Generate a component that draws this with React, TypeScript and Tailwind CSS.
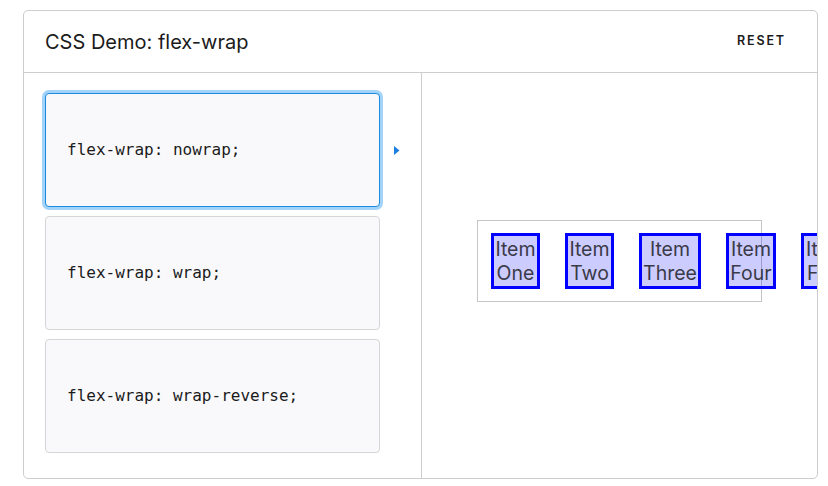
const choices = ["flex-wrap: nowrap;", "flex-wrap: wrap;", "flex-wrap: wrap-reverse;"];

const items = [
  { a: "Item", b: "One", w: "w-[49px]" },
  { a: "Item", b: "Two", w: "w-[49px]" },
  { a: "Item", b: "Three", w: "w-[62px]" },
  { a: "Item", b: "Four", w: "w-[50px]" },
  { a: "Item", b: "Five", w: "w-[50px]" },
];

function App() {
  return (
    <div className="w-[828px] h-[486px] bg-white pt-[10px] pl-[23px] font-['Inter',sans-serif]">
      <div className="w-[795px] h-[469px] border border-[#cdcdcd] rounded-[5px] flex flex-col overflow-hidden">
        <div className="h-[62px] shrink-0 flex items-center justify-between pl-[21px] pr-[31px] border-b border-[#cdcdcd]">
          <h1 className="text-[20px] text-[#1b1b1b] font-normal">CSS Demo: flex-wrap</h1>
          <button className="text-[12.5px] font-semibold tracking-[0.15em] text-[#1b1b1b]">RESET</button>
        </div>
        <div className="flex flex-1 min-h-0">
          <div className="w-[398px] shrink-0 border-r border-[#cdcdcd] pt-[20px] pl-[21px] flex flex-col gap-[9px]">
            {choices.map((c, i) => (
              <div key={c} className="relative w-[335px]">
                <div
                  className={
                    i === 0
                      ? "h-[114px] rounded-[4px] bg-[#f9f9fb] border border-[#1b8be0] ring-[3px] ring-[#a3d3f8] flex items-center pl-[21px]"
                      : "h-[114px] rounded-[4px] bg-[#f9f9fb] border border-[#d5d5d8] flex items-center pl-[21px]"
                  }
                >
                  <span className="font-['DejaVu_Sans_Mono',monospace] text-[16px] text-[#1b1b1b]">{c}</span>
                </div>
                {i === 0 && (
                  <svg className="absolute left-[349px] top-[53px]" width="6" height="9" viewBox="0 0 6 9">
                    <path d="M0 0 L5.5 4.5 L0 9 Z" fill="#1a7fe0" />
                  </svg>
                )}
              </div>
            ))}
          </div>
          <div className="flex-1 overflow-hidden pt-[147px] pl-[55px]">
            <div className="w-[285px] h-[82px] border border-[#c5c5c5] flex items-center pl-[13px] gap-[25px]">
              {items.map((it) => (
                <div
                  key={it.b}
                  className={`${it.w} shrink-0 h-[56px] border-[3px] border-[#0000ff] bg-[rgba(0,0,255,0.2)] flex flex-col items-center justify-center text-[19.5px] leading-[24px] text-[#3a3a48] font-['Inter',sans-serif]`}
                >
                  <span>{it.a}</span>
                  <span>{it.b}</span>
                </div>
              ))}
            </div>
          </div>
        </div>
      </div>
    </div>
  );
}

export default App;
